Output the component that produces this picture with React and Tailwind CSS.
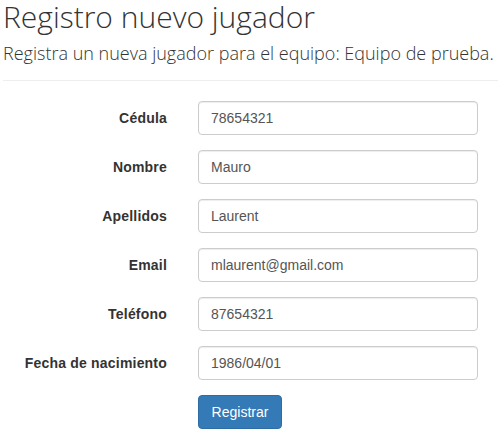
export default function App() {
  const fields = [
    ['Cédula', '78654321'],
    ['Nombre', 'Mauro'],
    ['Apellidos', 'Laurent'],
    ['Email', 'mlaurent@gmail.com'],
    ['Teléfono', '87654321'],
    ['Fecha de nacimiento', '1986/04/01'],
  ];

  return (
    <div className="w-[498px] h-[434px] bg-white overflow-hidden text-[#333]" style={{ fontFamily: '"Liberation Sans", Arial, sans-serif' }}>
      {/* Header */}
      <div className="pl-[3px]">
        <h1 className="text-[30px] leading-[41px] font-light -mt-[4px]" style={{ fontFamily: '"Open Sans", sans-serif' }}>
          Registro nuevo jugador
        </h1>
        <p className="text-[18px] leading-[25px] font-light mt-[4px] text-[#333]" style={{ fontFamily: '"Open Sans", sans-serif' }}>
          Registra un nueva jugador para el equipo: Equipo de prueba.
        </p>
        <hr className="mt-[14px] border-t border-[#eee]" />
      </div>

      {/* Form */}
      <form className="mt-[20px] flex flex-col gap-[15px]">
        {fields.map(([label, value]) => (
          <div key={label} className="flex items-center">
            <label className="w-[167px] text-right text-[14px] font-bold tracking-[0.2px] text-[#333]">{label}</label>
            <input
              readOnly
              value={value}
              className="ml-[31px] w-[280px] h-[34px] px-[12px] py-[6px] border border-[#ccc] rounded-[4px] text-[14px] text-[#555] shadow-[inset_0_1px_1px_rgba(0,0,0,0.075)] outline-none"
            />
          </div>
        ))}
        <div className="flex">
          <button type="button" className="ml-[198px] w-[84px] h-[34px] rounded-[4px] bg-[#337ab7] border border-[#2e6da4] text-white text-[14px]">
            Registrar
          </button>
        </div>
      </form>
    </div>
  );
}
